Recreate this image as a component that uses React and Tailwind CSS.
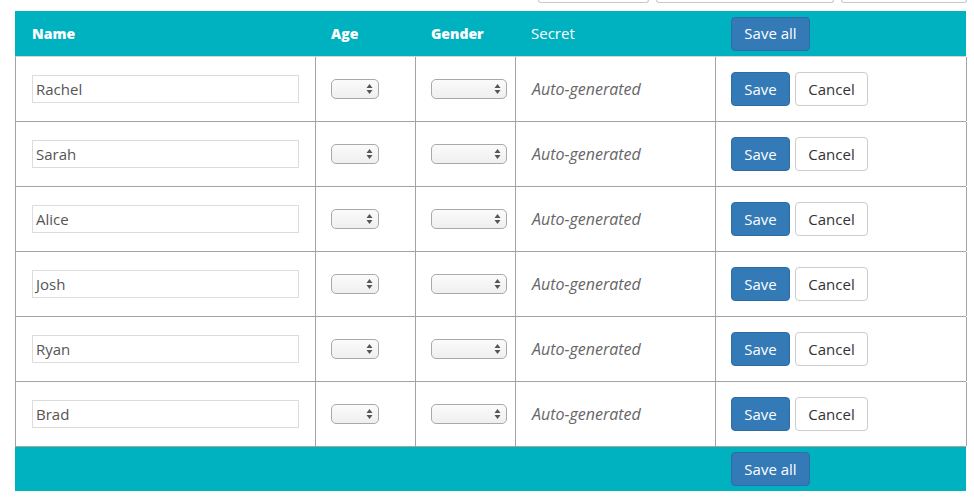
import React from "react";

const people = ["Rachel", "Sarah", "Alice", "Josh", "Ryan", "Brad"];

function Select({ w }) {
  return (
    <div
      className={`${w} h-[20px] rounded-[5px] border border-[#a9a9a9] bg-gradient-to-b from-[#fbfbfb] to-[#efefef] flex items-center justify-end pr-[5px]`}
    >
      <svg width="7" height="12" viewBox="0 0 7 12">
        <path d="M3.5 1 L6.5 5 L0.5 5 Z" fill="#555" />
        <path d="M3.5 11 L6.5 7 L0.5 7 Z" fill="#555" />
      </svg>
    </div>
  );
}

function PrimaryBtn({ children, w }) {
  return (
    <button
      className={`${w} h-[34px] rounded-[4px] bg-[#337ab7] border border-[#2e6da4] text-white text-[15px] flex items-center justify-center`}
    >
      {children}
    </button>
  );
}

export default function App() {
  return (
    <div
      className="w-[974px] h-[503px] bg-white overflow-hidden"
      style={{ fontFamily: '"Open Sans", "Liberation Sans", sans-serif' }}
    >
      <div className="flex gap-[7px] pl-[538px]">
        <div className="w-[111px] h-[3px] border border-t-0 border-[#c8c8c8] rounded-b-[4px]" />
        <div className="w-[178px] h-[3px] border border-t-0 border-[#c8c8c8] rounded-b-[4px]" />
        <div className="w-[126px] h-[3px] border border-t-0 border-[#c8c8c8] rounded-b-[4px]" />
      </div>
      <div className="ml-[15px] mt-[8px] w-[951px]">
        {/* header */}
        <div className="grid grid-cols-[300px_100px_100px_200px_251px] h-[45px] bg-[#00b1bf] text-white items-center">
          <div className="pl-[17px] font-extrabold text-[14px]">Name</div>
          <div className="pl-[16px] font-extrabold text-[14px]">Age</div>
          <div className="pl-[16px] font-extrabold text-[14px]">Gender</div>
          <div className="pl-[16px] text-[15px]">Secret</div>
          <div className="pl-[16px]">
            <PrimaryBtn w="w-[79px]">Save all</PrimaryBtn>
          </div>
        </div>
        {/* rows */}
        {people.map((p, i) => (
          <div
            key={p}
            className={`grid grid-cols-[300px_100px_100px_200px_251px] h-[65px] border-b border-[#a3a3a3] border-l text-[15px] ${
              i === 0 ? "border-t border-t-[#d4d4d4] h-[66px]" : ""
            }`}
          >
            <div className="border-r border-[#a3a3a3] px-[16px] flex items-center">
              <div className="w-full h-[28px] border border-[#dcdcdc] flex items-center pl-[3px] text-[#555]">
                {p}
              </div>
            </div>
            <div className="border-r border-[#a3a3a3] pl-[15px] flex items-center">
              <Select w="w-[48px]" />
            </div>
            <div className="border-r border-[#a3a3a3] pl-[15px] flex items-center">
              <Select w="w-[76px]" />
            </div>
            <div className="border-r border-[#a3a3a3] pl-[16px] flex items-center italic text-[16px] text-[#666]">
              Auto-generated
            </div>
            <div className="border-r border-[#a3a3a3] pl-[15px] flex items-center gap-[5px]">
              <PrimaryBtn w="w-[59px]">Save</PrimaryBtn>
              <button className="w-[73px] h-[34px] rounded-[4px] bg-white border border-[#cccccc] text-[#333] text-[15px] flex items-center justify-center">
                Cancel
              </button>
            </div>
          </div>
        ))}
        {/* footer */}
        <div className="grid grid-cols-[700px_251px] h-[44px] bg-[#00b1bf] items-center">
          <div />
          <div className="pl-[16px]">
            <PrimaryBtn w="w-[79px]">Save all</PrimaryBtn>
          </div>
        </div>
      </div>
    </div>
  );
}
